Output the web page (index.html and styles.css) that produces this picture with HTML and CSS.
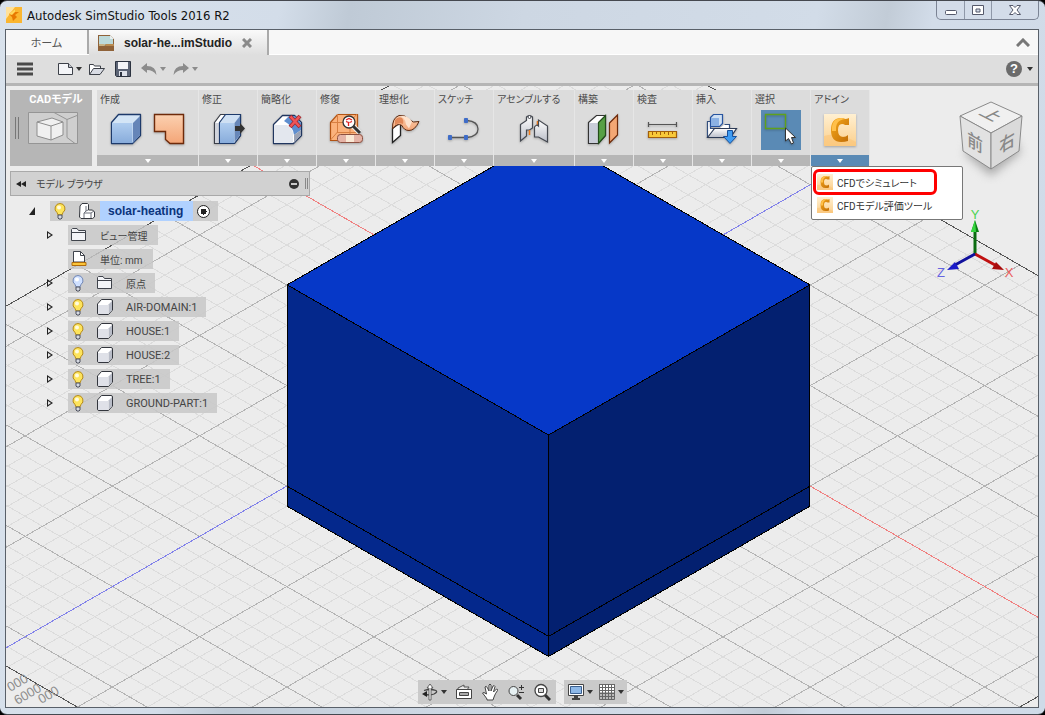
FILE: index.html
```html
<!DOCTYPE html>
<html lang="ja">
<head>
  <meta charset="UTF-8" />
  <meta name="viewport" content="width=device-width, initial-scale=1.0"/>
  <title>Autodesk SimStudio Tools 2016 R2</title>
  <link rel="stylesheet" href="styles.css">
</head>
<body>
  <svg class="defs" width="0" height="0" aria-hidden="true">
    <defs>
      <linearGradient id="gBlue" x1="0" y1="0" x2="0" y2="1"><stop offset="0" stop-color="#b0cdef"/><stop offset="1" stop-color="#88acdb"/></linearGradient>
      <linearGradient id="gOrange" x1="0" y1="0" x2="0" y2="1"><stop offset="0" stop-color="#fbd0b0"/><stop offset="1" stop-color="#f4a577"/></linearGradient>
      <linearGradient id="gGrey" x1="0" y1="0" x2="0" y2="1"><stop offset="0" stop-color="#ffffff"/><stop offset="1" stop-color="#b9bdc8"/></linearGradient>
      <linearGradient id="gGold" x1="0" y1="0" x2="1" y2="1"><stop offset="0" stop-color="#f5a81c"/><stop offset="1" stop-color="#c26d05"/></linearGradient>
      <linearGradient id="gCream" x1="0" y1="0" x2="0" y2="1"><stop offset="0" stop-color="#fff0d2"/><stop offset="1" stop-color="#fbcf8c"/></linearGradient>
      <symbol id="bulb" viewBox="0 0 20 20">
        <path d="M10 2.500a5 5 0 0 0-3 9l1 2.500h4l1-2.500a5 5 0 0 0-3-9z" fill="#fde45c" stroke="#b58a1c"/>
        <circle cx="9" cy="6.500" r="2" fill="#fffbe0"/>
        <path d="M8 14h4v3l-1 1H9l-1-1z" fill="#d5d9e2" stroke="#4b4f5c"/>
      </symbol>
      <symbol id="bulbOff" viewBox="0 0 20 20">
        <path d="M10 2.500a5 5 0 0 0-3 9l1 2.500h4l1-2.500a5 5 0 0 0-3-9z" fill="#cfe0ff" stroke="#7187b5"/>
        <circle cx="9" cy="6.500" r="2" fill="#fff"/>
        <path d="M8 14h4v3l-1 1H9l-1-1z" fill="#d5d9e2" stroke="#4b4f5c"/>
      </symbol>
      <symbol id="folder" viewBox="0 0 18 18">
        <path d="M1.500 14.500v-11l1-1H7l1.500 2h7v10z" fill="#f3f4f7" stroke="#3f434b"/>
        <path d="M2 6.500h13" stroke="#3f434b"/>
      </symbol>
      <symbol id="body" viewBox="0 0 18 18">
        <path d="M1.500 6l4-4.500h9.500q1.500 0 1.500 1.500v9l-4 4.500H3q-1.500 0-1.500-1.500z" fill="#fff" stroke="#33363d"/>
        <path d="M2 7h10v9H3q-1 0-1-1z" fill="#dfe1e8"/>
        <path d="M12.500 6.500v9.500l3.500-4V3z" fill="#b9bdc8"/>
      </symbol>
      <symbol id="cfd" viewBox="0 0 32 32">
        <path d="M0 0h32v32H0z" fill="url(#gCream)"/>
        <path d="M0 22Q14 18 32 28v4H0z" fill="#fbc478" opacity=".6"/>
        <path d="M25 4v7h-4q-1-1-3-1-4 0-4 6 0 7 5 7 3 0 5-2v6q-3 1-7 1Q7 28 7 16 7 4 17 4q3 0 4 1 2 0 4-1z" fill="url(#gGold)"/>
        <path d="M8 17Q7 5 17 4q3 0 4 1-10 1-9 12z" fill="#ffc04a"/>
      </symbol>
    </defs>
  </svg>

  <div class="window">
    <header class="titlebar">
      <svg class="app-icon" width="16" height="16" viewBox="0 0 16 16"><path d="M0 0h16v16H0z" fill="#fbb630"/><path d="M0 0h9L0 12z" fill="#ffe19a"/><path d="M3 7l6-5v3h4L9 8l2 2-4 4-1-4z" fill="#e87800"/><path d="M3 7l6-5v3L6 8z" fill="#ffd65a"/></svg>
      <h1>Autodesk SimStudio Tools 2016 R2</h1>
      <div class="window-buttons">
        <button aria-label="最小化"><svg width="14" height="12" viewBox="0 0 14 12"><rect x="1.500" y="6.500" width="11" height="4" rx="1" fill="#fff" stroke="#55596b"/></svg></button>
        <button aria-label="最大化"><svg width="14" height="12" viewBox="0 0 14 12"><path d="M1.500 1.500h11v9h-11zM5 5v3h4V5z" fill="#fff" stroke="#55596b" fill-rule="evenodd"/></svg></button>
        <button class="close" aria-label="閉じる"><svg width="14" height="12" viewBox="0 0 14 12"><path d="M1.500 1.500h3.500l2 2 2-2h3.500L9 6l3.500 4.500H9l-2-2-2 2H1.500L5 6z" fill="#fff" stroke="#55596b"/></svg></button>
      </div>
    </header>

    <main class="workspace">
      <nav class="tabs">
        <a class="tab" href="#">ホーム</a>
        <div class="tab active">
          <svg width="16" height="16" viewBox="0 0 16 16"><path d="M0 0h12l4 4v12H0z" fill="#8f6239"/><path d="M1 1h11l3 3v5H8L6 11H1z" fill="#bcd9da"/><path d="M1 9h6l-1 2H1z" fill="#c8b184"/><path d="M8 9h8v2H7z" fill="#b98a50"/><path d="M12 0l4 4h-4z" fill="#e8eeee"/></svg>
          <a href="#">solar-he...imStudio</a>
          <button class="tab-close" aria-label="タブを閉じる"><svg width="10" height="10" viewBox="0 0 10 10"><path d="M1 1l8 8M9 1L1 9" stroke="#8a8a8a" stroke-width="3"/></svg></button>
        </div>
        <button class="collapse" aria-label="折りたたむ"><svg width="14" height="9" viewBox="0 0 14 9"><path d="M1 8l6-6 6 6" fill="none" stroke="#777" stroke-width="3"/></svg></button>
      </nav>

      <div class="toolbar">
        <button class="menu-btn" aria-label="メニュー"><svg width="18" height="14" viewBox="0 0 18 14"><path d="M1 2h16M1 7h16M1 12h16" stroke="#4a4a4a" stroke-width="3"/></svg></button>
        <button class="split" aria-label="新規"><svg width="18" height="16" viewBox="0 0 18 16"><path d="M1.500 2.500h10l4 4v7h-14z" fill="#f4f5f8" stroke="#3c4048"/><path d="M11.500 2.500v4h4" fill="#c5c8d0" stroke="#3c4048"/></svg><span class="caret"></span></button>
        <button aria-label="開く"><svg width="18" height="16" viewBox="0 0 18 16"><path d="M1.500 13.500v-10h4l1 1.500h6v3" fill="#fff" stroke="#3c4048"/><path d="M1.500 13.500l4-6h11l-4.500 6z" fill="#d9dce4" stroke="#3c4048"/></svg></button>
        <button class="save" aria-label="保存"><svg width="16" height="16" viewBox="0 0 16 16"><path d="M.5.5h15v15h-14l-1-1z" fill="#5c6475" stroke="#2c3340"/><path d="M3 1h10v7H3z" fill="#f4f5f8"/><path d="M4 10h8v5H4z" fill="#dfe2ea"/><path d="M5 11h2v4H5z" fill="#2c3340"/></svg></button>
        <button class="split off" aria-label="元に戻す"><svg width="18" height="14" viewBox="0 0 18 14"><path d="M1 6l6-5v3q9 0 9.500 9Q13 8 7 8v3z" fill="#8c8c8c"/></svg><span class="caret"></span></button>
        <button class="split off" aria-label="やり直し"><svg width="18" height="14" viewBox="0 0 18 14"><path d="M17 6l-6-5v3Q2 4 1.500 13 5 8 11 8v3z" fill="#8c8c8c"/></svg><span class="caret"></span></button>
        <button class="split help" aria-label="ヘルプ"><span class="help-mark">?</span><span class="caret"></span></button>
      </div>

      <div class="canvas">
        <svg class="scene" viewBox="6 86 1032 620" preserveAspectRatio="xMidYMid slice" aria-hidden="true">
          <path id="gridMinor" class="grid-minor"/>
          <path id="gridMajor" class="grid-major"/>
          <path id="gridEdge" class="grid-edge"/>
          <path id="axisX" class="axis-x"/>
          <path id="axisZ" class="axis-z"/>
          <g class="ticks">
            <text transform="translate(11 691) rotate(-30)">000</text>
            <text transform="translate(18 704) rotate(-30)">6000</text>
            <text transform="translate(42 703) rotate(-30)">000</text>
          </g>
          <g class="solid">
            <path class="face-top" d="M548.500 134.500L809.500 284.500 548.500 434.500 287.500 284.500z"/>
            <path class="face-left" d="M287.500 284.500L548.500 434.500V655.500L287.500 505.500z"/>
            <path class="face-right" d="M809.500 284.500L548.500 434.500V655.500L809.500 505.500z"/>
            <path fill="none" d="M287.500 485.500L548.500 635.500 809.500 485.500"/>
          </g>
        </svg>

        <div class="ribbon">
          <button class="mode">
            <span class="mode-label">CADモデル</span>
            <span class="mode-body">
              <span class="grip"></span>
              <svg width="50" height="32" viewBox="0 0 50 32"><path d="M.5.5h49v31H.5z" fill="#cfcfcf" stroke="#959595"/><path d="M26 .5l13 7 10-4M39 7.500v18l8 6" fill="none" stroke="#959595"/><path d="M9 10l15-4 11 4v13l-12 5-14-4z" fill="#f0f0f0" stroke="#8d8d8d"/><path d="M9 10l14 4 12-4M23 14v14" fill="none" stroke="#8d8d8d"/></svg>
            </span>
          </button>

          <section class="panel">
            <h2>作成</h2>
            <div class="tools">
              <button aria-label="ボックス"><svg width="36" height="36" viewBox="0 0 36 36"><path d="M3.500 10.500l7-8h22v21l-8 8h-21z" fill="#d4e5f6" stroke="#1d3a6b" stroke-width="1.300" stroke-linejoin="round"/><path d="M4 11h20.500v20H4z" fill="url(#gBlue)"/><path d="M25 11l7-7v19l-7 8z" fill="#6585b8"/></svg></button>
              <button aria-label="シェル"><svg width="36" height="36" viewBox="0 0 36 36"><path d="M3.500 2.500h29v29H19l-4.500-4v-8h-11z" fill="url(#gOrange)" stroke="#6e2a0a" stroke-width="1.400"/></svg></button>
            </div>
            <button class="drop" aria-label="作成メニュー"></button>
          </section>
          <section class="panel">
            <h2>修正</h2>
            <div class="tools">
              <button aria-label="プレス/プル"><svg width="36" height="36" viewBox="0 0 36 36"><path d="M4.500 10.500l6-8h20v21l-6 8h-20z" fill="#fff" stroke="#3b3f48" stroke-width="1.200"/><path d="M5 11h4v20H5z" fill="#d1d4dc"/><path d="M9.500 10.500l6-8h15v21l-6 8h-15z" fill="#cfe0f3" stroke="#1d3a6b" stroke-width="1.200"/><path d="M10 11h14v20H10z" fill="url(#gBlue)"/><path d="M24.500 11l5.500-7v19l-5.500 7z" fill="#6787b9"/><path d="M25 14h5v-3l5 5.500-5 5.500v-3h-5z" fill="#333"/></svg></button>
            </div>
            <button class="drop" aria-label="修正メニュー"></button>
          </section>
          <section class="panel">
            <h2>簡略化</h2>
            <div class="tools">
              <button aria-label="フィーチャを削除"><svg width="36" height="36" viewBox="0 0 36 36"><path d="M4.500 12.500l9-9h12l7 7v13l-8 8h-20z" fill="#fff" stroke="#20365f" stroke-width="1.300" stroke-linejoin="round"/><path d="M5 13h13q6 4 6 9v9H5z" fill="#e3e7ee"/><path d="M15 9l5-5h6l6 7v7l-7 5q-1-9-10-14z" fill="#5e8ecf"/><path d="M25 23l7-5v5l-7 8z" fill="#9ba3b5"/><path d="M21 4l10 11M31 4L21 15" stroke="#a5272d" stroke-width="4"/><path d="M21.500 4.500l9 10M30.500 4.500l-9 10" stroke="#f05558" stroke-width="2.500"/></svg></button>
            </div>
            <button class="drop" aria-label="簡略化メニュー"></button>
          </section>
          <section class="panel">
            <h2>修復</h2>
            <div class="tools">
              <button aria-label="修復"><svg width="36" height="36" viewBox="0 0 36 36"><path d="M2.500 10.500l7-8h20v20l-7 6h-20z" fill="#fbb27c" stroke="#b25414" stroke-width="1.200"/><path d="M3 10.500h19v18M22 10l7-8M9.500 2v18l-7 8M9 20.500h20" fill="none" stroke="#d77f42"/><path d="M25 14l7 7" stroke="#eee" stroke-width="5"/><path d="M25 14l7 7" stroke="#333" stroke-width="3"/><circle cx="21" cy="10" r="6" fill="#fff" stroke="#333" stroke-width="1.300"/><path d="M18 8l3-1.500L24 8M18 9.500l2.500 1V14M24 9.500l-2.500 1" fill="none" stroke="#e02020" stroke-width="1.300"/><rect x="9.500" y="22.500" width="25" height="8" rx="3" fill="#e5b3a6" stroke="#8c5040"/><path d="M18 23h8v7h-8z" fill="#fae8d4"/></svg></button>
            </div>
            <button class="drop" aria-label="修復メニュー"></button>
          </section>
          <section class="panel">
            <h2>理想化</h2>
            <div class="tools">
              <button aria-label="中立面"><svg width="36" height="36" viewBox="0 0 36 36"><path d="M5.500 30.500v-14l8-6v13z" fill="#fff" stroke="#222" stroke-width="1.300"/><path d="M5.500 17Q5 6 12 3.500q6-1 10 4 4 4 10 2-4 9-10 9-5 0-7-5-5-3-9.500 3.500z" fill="url(#gOrange)" stroke="#5e2a10"/><path d="M8 8q3-4 7-2 2 2 1 6-4-2-8 1z" fill="#e2895a"/><path d="M12 4.500q6 0 7 8l3 4 3-7q-5-7-13-5z" fill="#fde3cf"/></svg></button>
            </div>
            <button class="drop" aria-label="理想化メニュー"></button>
          </section>
          <section class="panel">
            <h2>スケッチ</h2>
            <div class="tools">
              <button aria-label="スケッチ"><svg width="36" height="36" viewBox="0 0 36 36"><path d="M4 25.500h17q11-1 11-8.500t-11-8.500" fill="none" stroke="#555" stroke-width="1.300"/><path d="M2.500 23.500h3v4h-3zM18.500 23.500h3v4h-3zM18.500 6.500h3v4h-3z" fill="#3e6cc8" stroke="#3e6cc8"/></svg></button>
            </div>
            <button class="drop" aria-label="スケッチメニュー"></button>
          </section>
          <section class="panel wide">
            <h2>アセンブルする</h2>
            <div class="tools">
              <button aria-label="ジョイント"><svg width="36" height="36" viewBox="0 0 36 36"><path d="M4.500 12.500l6-4V5q3-3 6 0v11l-3 2h-3v6l-6 5z" fill="url(#gGrey)" stroke="#444850" stroke-width="1.200"/><circle cx="13.500" cy="5" r="1.500" fill="#fff" stroke="#444850"/><path d="M13.500 18v5M21.500 9v6" stroke="#f07a1a" stroke-width="1.500"/><path d="M18.500 15q2-3 4-1V8l9 6v16l-9-5h-4z" fill="url(#gGrey)" stroke="#444850" stroke-width="1.200"/></svg></button>
            </div>
            <button class="drop" aria-label="アセンブルメニュー"></button>
          </section>
          <section class="panel">
            <h2>構築</h2>
            <div class="tools">
              <button aria-label="オフセット平面"><svg width="36" height="36" viewBox="0 0 36 36"><path d="M2.500 10.500l8-7h9v20l-7 8h-10z" fill="#fff" stroke="#333" stroke-width="1.200"/><path d="M3 11h9v20H3z" fill="#c9cdd8"/><path d="M12.500 10.500l7-7v20l-7 8z" fill="#57a045" stroke="#234c1b" stroke-width="1.200"/><path d="M23.500 11l8-8v20l-8 8z" fill="#f3a774" stroke="#6e2a0a" stroke-width="1.200"/></svg></button>
            </div>
            <button class="drop" aria-label="構築メニュー"></button>
          </section>
          <section class="panel">
            <h2>検査</h2>
            <div class="tools">
              <button aria-label="計測"><svg width="36" height="36" viewBox="0 0 36 36"><path d="M4 12.500h28M3.500 10v5M31.500 10v5" stroke="#555" stroke-width="1.200"/><path d="M3.500 19.500h28v6h-28z" fill="#f8c93a" stroke="#a35f0a" stroke-width="1.200"/><path d="M7.500 20v3M11.500 20v2M15.500 20v3M19.500 20v2M23.500 20v3M27.500 20v2" stroke="#a35f0a"/></svg></button>
            </div>
            <button class="drop" aria-label="検査メニュー"></button>
          </section>
          <section class="panel">
            <h2>挿入</h2>
            <div class="tools">
              <button aria-label="挿入"><svg width="36" height="36" viewBox="0 0 36 36"><path d="M3.500 25.500v-16h3v7h19v-4h-5" fill="#fff" stroke="#34507e" stroke-width="1.200"/><path d="M3.500 25.500l7-9h22l-6 9z" fill="url(#gGrey)" stroke="#2c3a55" stroke-width="1.200"/><path d="M6.500 5.500l3-3h9v9l-3 3h-9z" fill="#cfe0f3" stroke="#2855a0" stroke-width="1.200"/><path d="M7 6h8v8H7z" fill="#8cb2e4"/><path d="M23.500 18.500h5v6h4l-6.500 7-6.500-7h4z" fill="#3f9cf2" stroke="#17509c"/></svg></button>
            </div>
            <button class="drop" aria-label="挿入メニュー"></button>
          </section>
          <section class="panel">
            <h2>選択</h2>
            <div class="tools">
              <button class="selected" aria-label="選択"><svg width="36" height="36" viewBox="0 0 36 36"><path d="M2.500 2.500h20v14h-20z" fill="none" stroke="#5fa11c" stroke-width="1.400"/><path d="M22.500 16v13l3-2.500 3 5.500 2-1-2-5.500h4z" fill="#fff" stroke="#333"/></svg></button>
            </div>
            <button class="drop" aria-label="選択メニュー"></button>
          </section>
          <section class="panel open">
            <h2>アドイン</h2>
            <div class="tools">
              <button aria-label="CFD"><svg width="32" height="32"><use href="#cfd"/></svg></button>
            </div>
            <button class="drop" aria-label="アドインメニュー"></button>
            <div class="addin-menu">
              <button class="marked"><svg width="16" height="16"><use href="#cfd"/></svg>CFDでシミュレート</button>
              <button><svg width="16" height="16"><use href="#cfd"/></svg>CFDモデル評価ツール</button>
            </div>
          </section>
        </div>

        <aside class="browser">
          <header>
            <button aria-label="たたむ"><svg width="12" height="8" viewBox="0 0 12 8"><path d="M6 1v6L1 4zM11 1v6L6 4z" fill="#222"/></svg></button>
            <h2>モデル ブラウザ</h2>
            <button class="minus" aria-label="最小化"><svg width="10" height="10" viewBox="0 0 10 10"><circle cx="5" cy="5" r="5" fill="#333"/><path d="M2 5h6" stroke="#fff" stroke-width="1.500"/></svg></button>
            <span class="grip"></span>
          </header>
          <ul class="tree">
            <li class="root">
              <button class="twist down" aria-label="閉じる"></button>
              <span class="node"><svg width="20" height="20"><use href="#bulb"/></svg><svg width="18" height="18" viewBox="0 0 18 18"><path d="M2 4l2-2.500h5.500l1 1V8h4l2 2v5l-2 1.500H3L1.500 15z" fill="#fff" stroke="#33363d"/><path d="M8 4v5L6 11v5M8 9l2-1M13 11v5M6 11h7l3-2" fill="none" stroke="#6c707a"/></svg><a href="#">solar-heating</a><input type="radio" checked aria-label="solar-heating をアクティブ化"></span>
            </li>
            <li>
              <button class="twist" aria-label="開く"></button>
              <span class="node plain"><svg width="18" height="18"><use href="#folder"/></svg><a class="ja" href="#">ビュー管理</a></span>
            </li>
            <li>
              <span class="twist none"></span>
              <span class="node plain"><svg width="18" height="18" viewBox="0 0 18 18"><path d="M3.500 12V1.500h7l4 4V12z" fill="#fff" stroke="#3f434b"/><path d="M10.500 1.500v4h4" fill="none" stroke="#3f434b"/><path d="M2 12.500h14v3H2z" fill="#fbc53a" stroke="#b06c0c"/></svg><a class="ja" href="#">単位: mm</a></span>
            </li>
            <li>
              <button class="twist" aria-label="開く"></button>
              <span class="node"><svg width="20" height="20"><use href="#bulbOff"/></svg><svg width="18" height="18"><use href="#folder"/></svg><a class="ja" href="#">原点</a></span>
            </li>
            <li>
              <button class="twist" aria-label="開く"></button>
              <span class="node"><svg width="20" height="20"><use href="#bulb"/></svg><svg width="18" height="18"><use href="#body"/></svg><a href="#">AIR-DOMAIN:1</a></span>
            </li>
            <li>
              <button class="twist" aria-label="開く"></button>
              <span class="node"><svg width="20" height="20"><use href="#bulb"/></svg><svg width="18" height="18"><use href="#body"/></svg><a href="#">HOUSE:1</a></span>
            </li>
            <li>
              <button class="twist" aria-label="開く"></button>
              <span class="node"><svg width="20" height="20"><use href="#bulb"/></svg><svg width="18" height="18"><use href="#body"/></svg><a href="#">HOUSE:2</a></span>
            </li>
            <li>
              <button class="twist" aria-label="開く"></button>
              <span class="node"><svg width="20" height="20"><use href="#bulb"/></svg><svg width="18" height="18"><use href="#body"/></svg><a href="#">TREE:1</a></span>
            </li>
            <li>
              <button class="twist" aria-label="開く"></button>
              <span class="node"><svg width="20" height="20"><use href="#bulb"/></svg><svg width="18" height="18"><use href="#body"/></svg><a href="#">GROUND-PART:1</a></span>
            </li>
          </ul>
        </aside>

        <svg class="viewcube" width="76" height="88" viewBox="0 0 76 88">
          <path d="M12 58L38 80 68 56 60 40H20z" class="cube-shadow"/>
          <path d="M38 6l31 14-31 17L7 20z" fill="#f0f0f0" stroke="#8a8a8a"/>
          <path d="M7 20l31 17v36L10 55z" fill="#e2e2e2" stroke="#8a8a8a"/>
          <path d="M69 20L38 37v36l28-18z" fill="#dadada" stroke="#8a8a8a"/>
          <text class="cube-text" transform="matrix(.87 .45 -.87 .45 38 19)" y="6">上</text>
          <text class="cube-text" transform="matrix(.87 .5 0 1 22 46)" y="7">前</text>
          <text class="cube-text" transform="matrix(.87 -.5 0 1 54 46)" y="7">右</text>
        </svg>

        <svg class="triad" width="84" height="76" viewBox="0 0 84 76">
          <path d="M39 48V22" stroke="#0a6b10" stroke-width="3"/>
          <path d="M39 14l4 12h-8z" fill="#0b7d14"/><path d="M39 14l1 12h-5z" fill="#35d63f"/>
          <path d="M39 48l20 11" stroke="#c01010" stroke-width="3"/>
          <path d="M68 64l-12-1 4-7z" fill="#a80c0c"/>
          <path d="M39 48L19 59" stroke="#10109c" stroke-width="3"/>
          <path d="M11 64l12-1-4-7z" fill="#1a1ac8"/>
          <text x="39" y="13" fill="#4bd353">Y</text>
          <text x="73" y="71" fill="#ea5a5a">X</text>
          <text x="5" y="71" fill="#6464e0">Z</text>
        </svg>

        <div class="navbar">
          <div class="nav-group">
            <button class="split" aria-label="オービット"><svg width="18" height="18" viewBox="0 0 18 18"><path d="M4 11.500q5 1 9-.5 4-2 2-3.500-6-2-12 0" fill="none" stroke="#444" stroke-width="1.300"/><path d="M8 17V5H6l3-4 3 4h-2v12z" fill="#fff" stroke="#444" stroke-width=".8"/><path d="M1 11l5-3v6z" fill="#222"/></svg><span class="caret"></span></button>
            <button aria-label="ビュー"><svg width="18" height="18" viewBox="0 0 18 18"><path d="M3 7V5l6-3v2h5L12 7" fill="#e8e8e8" stroke="#555"/><path d="M1.500 6.500h15v9h-15z" fill="#fff" stroke="#444"/><path d="M4.500 9.500h9v3h-9z" fill="#aaa" stroke="#444"/></svg></button>
            <button aria-label="画面移動"><svg width="18" height="18" viewBox="0 0 18 18"><path d="M6 16q-2-3-4.500-6 1-1.500 4 1L4 4q1-2 2.500 1L8 8V2q1-2 2 0v6l2-5q1.500-1 2 .5L12.500 9l3-3q1.500 0 1 1.500Q14 11 13 14l-1 3H6z" fill="#fff" stroke="#444"/></svg></button>
            <button aria-label="ズーム"><svg width="18" height="18" viewBox="0 0 18 18"><path d="M10 12l4 4" stroke="#333" stroke-width="3"/><circle cx="6.500" cy="8" r="4.500" fill="#e6f0f2" stroke="#444"/><path d="M12 4.500h5M14.500 2v5M12 9.500h5" stroke="#333"/></svg></button>
            <button aria-label="窓ズーム"><svg width="18" height="18" viewBox="0 0 18 18"><path d="M12 12l5 5" stroke="#333" stroke-width="3"/><circle cx="8" cy="7.500" r="6" fill="#fff" stroke="#444" stroke-width="1.300"/><path d="M5.500 5.500h5v4h-5z" fill="#d8d8d8" stroke="#444"/></svg></button>
          </div>
          <div class="nav-group">
            <button class="split" aria-label="表示設定"><svg width="18" height="18" viewBox="0 0 18 18"><path d="M1.500 1.500h15v11h-15z" fill="#fff" stroke="#444"/><path d="M3.500 3.500h11v7h-11z" fill="#8db8e8" stroke="#3a5f8f"/><path d="M7 13h4v2h2v2H5v-2h2z" fill="#444"/></svg><span class="caret"></span></button>
            <button class="split" aria-label="グリッド"><svg width="18" height="18" viewBox="0 0 18 18"><path d="M1.500 1.500h15v15h-15z" fill="#fff" stroke="#444"/><path d="M1 9h16v8H1z" fill="#bbb"/><path d="M1.500 1.500h15v15h-15zM4.500 1v16M7.500 1v16M10.500 1v16M13.500 1v16M1 4.500h16M1 7.500h16M1 10.500h16M1 13.500h16" fill="none" stroke="#666"/></svg><span class="caret"></span></button>
          </div>
        </div>
      </div>
    </main>
  </div>

  <script>
    // isometric ground grid, one unit = one small cell, every fifth line is heavier
    const origin = { x: 548.5, y: 335 };
    const cell = { x: 17.42, y: 10.03 };
    const from = -17, to = 32;

    function point(u, v) {
      return (origin.x + (u - v) * cell.x).toFixed(1) + " " + (origin.y + (u + v) * cell.y).toFixed(1);
    }
    function lineU(i) { return "M" + point(from, i) + "L" + point(to, i); }
    function lineV(i) { return "M" + point(i, from) + "L" + point(i, to); }
    function lines(i) { return lineU(i) + lineV(i); }

    let minor = "", major = "";
    for (let i = from + 1; i < to; i++) {
      if (i === 0) continue;
      if (i % 5 === 0) major += lines(i);
      else minor += lines(i);
    }
    document.getElementById("gridMinor").setAttribute("d", minor);
    document.getElementById("gridMajor").setAttribute("d", major);
    document.getElementById("gridEdge").setAttribute("d", lines(from) + lines(to));
    document.getElementById("axisX").setAttribute("d", lineU(0));
    document.getElementById("axisZ").setAttribute("d", lineV(0));
  </script>
</body>
</html>
```
FILE: styles.css
```css
* { box-sizing: border-box; }
body { margin: 0; background: #000; font-family: Roboto, "Noto Sans CJK JP", sans-serif; font-size: 11px; color: #444; }
h1, h2 { margin: 0; font-weight: normal; }
button { border: 0; padding: 0; margin: 0; background: none; font: inherit; color: inherit; display: flex; align-items: center; justify-content: center; }
a { color: inherit; text-decoration: none; }
svg { display: block; flex: none; }
.defs { position: absolute; }

.window { height: 100vh; min-height: 480px; display: flex; flex-direction: column; padding: 0 6px 6px 5px; border-top: 1px solid #45484f; border-bottom: 1px solid #45484f; border-radius: 7px; background: linear-gradient(100deg, #d9e2ec 0, #d3dde9 24%, #bfcad6 30%, #cdd7e3 45%, #d2dce8 70%, #c2ccd7 76%, #d2dce9 80%, #cfdbe8 100%); }
.titlebar { display: flex; align-items: center; height: 28px; flex: none; }
.titlebar h1 { font-family: "DejaVu Sans Condensed", "DejaVu Sans", sans-serif; font-size: 13px; color: #111; margin-left: 5px; }
.app-icon { margin-left: 1px; }
.window-buttons { display: flex; align-self: flex-start; margin-left: auto; border: 1px solid #7b8394; border-top: 0; border-radius: 0 0 5px 5px; background: #d3dce9; }
.window-buttons button { width: 27px; height: 18px; }
.window-buttons button + button { border-left: 1px solid #8f98a8; }
.window-buttons .close { width: 47px; }

.workspace { flex: 1; min-height: 0; display: flex; flex-direction: column; border: 1px solid #596069; background: #ececec; }
.tabs { display: flex; height: 25px; flex: none; background: #f7f7f7; border-bottom: 1px solid #fff; }
.tab { display: flex; align-items: center; justify-content: center; width: 83px; color: #555; border-right: 2px solid #aaa; font-feature-settings: "palt"; }
.tab.active { width: 180px; gap: 10px; justify-content: flex-start; padding-left: 9px; background: linear-gradient(#fafafa, #dedede); color: #222; font: bold 12px "Liberation Sans", sans-serif; margin-bottom: -1px; }
.collapse { width: 30px; margin-left: auto; }

.toolbar { display: flex; align-items: center; height: 31px; flex: none; padding: 0 5px 0 10px; background: #dedede; border-bottom: 3px solid #b5b5b5; }
.toolbar button { margin-right: 9px; }
.toolbar .menu-btn { margin-right: 23px; }
.toolbar .split { margin-right: 6px; }
.toolbar .help { margin: 0 0 0 auto; gap: 5px; }
.caret { width: 0; height: 0; border: 3px solid transparent; border-top: 4px solid #333; border-bottom: 0; }
.split { gap: 1px; }
.toolbar .off { gap: 2px; }
.off .caret { border-top-color: #8c8c8c; }
.help-mark { width: 16px; height: 16px; border-radius: 50%; background: #6b6b6b; color: #fff; font: bold 13px/16px "Liberation Sans", sans-serif; text-align: center; }

.canvas { position: relative; flex: 1; min-height: 0; overflow: hidden; padding: 4px; }
.scene { position: absolute; inset: 0; width: 100%; height: 100%; }
.grid-minor { stroke: #dcdcdc; fill: none; shape-rendering: crispEdges; }
.grid-major { stroke: #b4b4b4; fill: none; shape-rendering: crispEdges; }
.grid-edge { stroke: #555; fill: none; shape-rendering: crispEdges; }
.axis-x { stroke: #f08080; shape-rendering: crispEdges; }
.axis-z { stroke: #8282ea; shape-rendering: crispEdges; }
.ticks { font: 13px "Liberation Sans", sans-serif; fill: #8c8c8c; }
.solid path { stroke: #000; shape-rendering: crispEdges; }
.face-top { fill: #0638c8; }
.face-left { fill: #04288c; }
.face-right { fill: #032070; }

.ribbon { position: relative; display: flex; }
.mode { flex-direction: column; justify-content: flex-start; align-items: stretch; width: 82px; height: 76px; margin-right: 5px; background: #b6b6b6; }
.mode-label { height: 18px; line-height: 20px; padding-left: 10px; font-weight: bold; color: #fff; font-feature-settings: "palt"; }
.mode-body { display: flex; align-items: center; height: 40px; gap: 9px; padding-left: 5px; }
.grip { width: 4px; height: 22px; border: 1px solid #777; border-width: 0 1px; }
.panel { position: relative; display: flex; flex-direction: column; background: #dcdcdc; border-right: 1px solid #e6e6e6; }
.panel h2 { height: 18px; line-height: 20px; padding-left: 3px; font-size: 10px; white-space: nowrap; font-feature-settings: "palt"; color: #4a4a4a; }
.tools { display: flex; justify-content: center; gap: 3px; height: 47px; padding: 2px 9px 0; }
.tools button { width: 40px; height: 40px; }
.tools svg { filter: drop-shadow(0 1px 1px rgba(0, 0, 0, .25)); }
.tools .selected { background: #5a8ab5; }
.wide { width: 81px; }
.drop { height: 11px; background: #b6b6b6; }
.drop::before { content: ""; border: 3px solid transparent; border-top: 4px solid #fff; border-bottom: 0; }
.open .drop { background: #5a8ab5; }
.addin-menu { position: absolute; z-index: 2; top: 100%; left: 0; width: 152px; padding: 2px 1px; background: #fff; border: 1px solid #777; border-radius: 2px; }
.addin-menu button { width: 100%; height: 24px; justify-content: flex-start; gap: 4px; padding-left: 4px; font-size: 10px; color: #333; font-feature-settings: "palt"; white-space: nowrap; }
.addin-menu .marked { width: 124px; height: 26px; margin-bottom: -2px; padding-left: 1px; border: 3px solid #f00; border-radius: 6px; }

.browser { position: relative; width: 300px; margin-top: 5px; }
.browser header { display: flex; align-items: center; height: 25px; padding: 0 1px 0 4px; background: #d1d1d1; border: 1px solid #a9a9a9; }
.browser h2 { margin-left: 9px; font-size: 10px; font-feature-settings: "palt"; }
.browser .minus { margin-left: auto; margin-right: 6px; }
.browser .grip { height: 11px; width: 3px; border-color: #888; }
.tree { list-style: none; margin: 5px 0 0; padding: 0; }
.tree li { display: flex; align-items: center; gap: 12px; height: 20px; margin-bottom: 4px; padding-left: 34px; }
.tree .root { padding-left: 16px; }
.twist { width: 12px; height: 12px; }
.twist::before { content: ""; width: 6px; height: 8px; background: #222; clip-path: polygon(0 0, 100% 50%, 0 100%, 0 0, 1px 2px, 1px 6px, 4px 4px, 1px 2px); }
.twist.down::before { clip-path: polygon(100% 0, 100% 100%, 0 100%); }
.twist.none::before { display: none; }
.node { display: flex; align-items: center; gap: 8px; height: 20px; padding-right: 9px; background: rgba(200, 200, 200, .85); }
.node a { margin-left: 4px; font-feature-settings: "palt"; white-space: nowrap; }
.node .ja { font-size: 10px; }
.node.plain { padding: 0 11px 0 2px; }
.root .node { padding-right: 8px; }
.root .node a { margin-left: -4px; padding: 0 10px 0 8px; background: #b0d1ff; color: #0a347c; font: bold 12px/20px "Liberation Sans", sans-serif; }
.root input { appearance: none; width: 13px; height: 13px; margin: 0 0 0 -4px; border: 1px solid #222; border-radius: 50%; background: radial-gradient(#222 0 3px, #fff 3px); }

.viewcube { position: absolute; top: 10px; right: 9px; }
.cube-shadow { fill: #aaa; filter: blur(5px); }
.cube-text { font: 500 18px "Noto Sans CJK JP", sans-serif; fill: #888; text-anchor: middle; }
.triad { position: absolute; top: 120px; right: 18px; font: 13px "Liberation Sans", sans-serif; text-anchor: middle; }

.navbar { position: absolute; bottom: 3px; left: 0; right: 0; display: flex; justify-content: center; gap: 8px; }
.nav-group { display: flex; align-items: center; gap: 8px; height: 24px; padding: 0 5px 0 3px; background: #cacaca; }
.nav-group + .nav-group { gap: 5px; padding: 0 3px; }
.nav-group .split { gap: 2px; }
```
